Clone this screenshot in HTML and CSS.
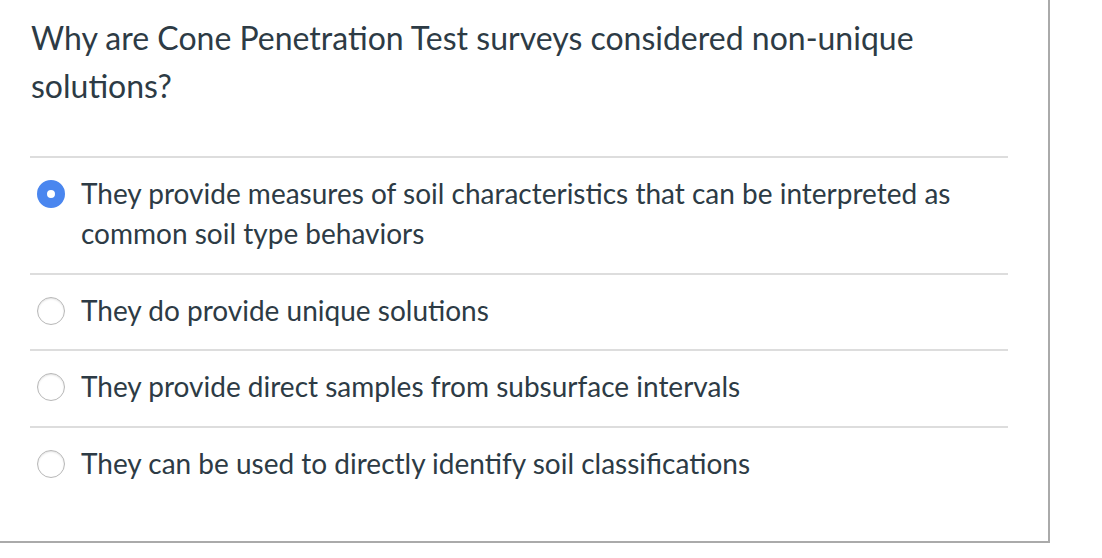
FILE: index.html
```html
<!DOCTYPE html>
<html>
<head>
<meta charset="utf-8">
<link rel="stylesheet" href="styles.css">
</head>
<body>
<div class="card">
  <div class="question">Why are Cone Penetration Test surveys considered non-unique solutions?</div>
  <div class="answers">
    <div class="answer">
      <span class="radio selected"></span>
      <span class="label">They provide measures of soil characteristics that can be interpreted as common soil type behaviors</span>
    </div>
    <div class="answer">
      <span class="radio"></span>
      <span class="label">They do provide unique solutions</span>
    </div>
    <div class="answer">
      <span class="radio"></span>
      <span class="label">They provide direct samples from subsurface intervals</span>
    </div>
    <div class="answer">
      <span class="radio"></span>
      <span class="label">They can be used to directly identify soil classifications</span>
    </div>
  </div>
</div>
</body>
</html>
```
FILE: styles.css
```css
html, body {
  margin: 0;
  padding: 0;
  background: #fff;
}
body {
  font-family: Lato, "Open Sans", sans-serif;
  color: #2d3b45;
}
.card {
  box-sizing: border-box;
  width: 1050px;
  height: 543px;
  border-right: 2px solid #aaaaaa;
  border-bottom: 2px solid #aaaaaa;
  padding: 14px 40px 0 31px;
}
.question {
  font-size: 32px;
  line-height: 48px;
  width: 900px;
}
.answers {
  margin-top: 46px;
  margin-left: -1px;
  width: 978px;
}
.answer {
  display: flex;
  align-items: flex-start;
  border-top: 2px solid #dddddd;
  padding: 15px 0 19.5px 7px;
}
.radio {
  flex: none;
  box-sizing: border-box;
  width: 28px;
  height: 28px;
  border-radius: 50%;
  margin-top: 7px;
  margin-right: 16px;
  border: 1px solid #b8b8b8;
  background: #fff;
  box-shadow: inset 0 1px 2px rgba(0,0,0,0.12);
}
.radio.selected {
  border: 10px solid #4a86ef;
  box-shadow: none;
}
.label {
  font-size: 28px;
  line-height: 40px;
}
```
